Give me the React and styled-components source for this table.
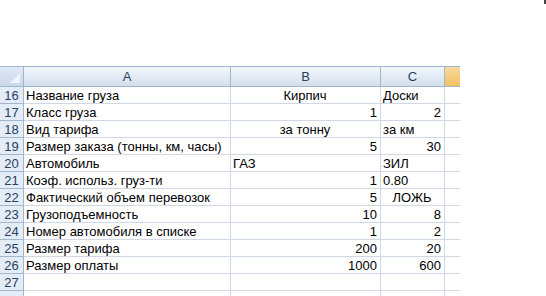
import React from 'react'
import styled, { createGlobalStyle } from 'styled-components'

const Global = createGlobalStyle`
  html, body { margin: 0; padding: 0; background: #fff; }
  body { font-family: "Liberation Sans", Arial, sans-serif; }
`

const Page = styled.div`
  position: relative;
  width: 546px;
  height: 296px;
  overflow: hidden;
  padding-top: 66px;
  box-sizing: border-box;
`

const Speck = styled.div`
  position: absolute;
  top: 0;
  right: 0;
  width: 2px;
  height: 4px;
  background: #444;
`

const Sheet = styled.div`
  display: grid;
  grid-template-columns: 24px 207px 150px 64px 15px;
  grid-template-rows: 21px;
  grid-auto-rows: 17px;
  width: 460px;
  font-size: 13px;
  color: #000;
`

const HeadCell = styled.div`
  box-sizing: border-box;
  border-top: 1px solid #9eb6ce;
  border-bottom: 1px solid #9eb6ce;
  border-right: ${p => (p.$last ? 'none' : '1px solid #9eb6ce')};
  background: ${p =>
    p.$active
      ? 'linear-gradient(#f9d99f, #f1c15f)'
      : 'linear-gradient(#f4f7fb 0%, #e2eaf5 55%, #d3ddeb 100%)'};
  color: #27415f;
  display: flex;
  align-items: center;
  justify-content: center;
  line-height: 1;
`

const Corner = styled(HeadCell)`
  position: relative;
  background: linear-gradient(#dfe8f5, #c9d8ec);
  &::after {
    content: '';
    position: absolute;
    right: 3px;
    bottom: 3px;
    border-left: 10px solid transparent;
    border-bottom: 10px solid #f1f5fb;
  }
`

const RowNum = styled.div`
  box-sizing: border-box;
  border-right: 1px solid #9eb6ce;
  border-bottom: 1px solid #9eb6ce;
  background: #e4ecf7;
  color: #27415f;
  display: flex;
  align-items: center;
  justify-content: center;
  line-height: 1;
`

const Cell = styled.div`
  box-sizing: border-box;
  border-bottom: 1px solid #d0d7e5;
  border-right: ${p => (p.$last ? 'none' : '1px solid #d0d7e5')};
  display: flex;
  align-items: center;
  justify-content: ${p =>
    p.$align === 'right' ? 'flex-end' : p.$align === 'center' ? 'center' : 'flex-start'};
  padding: 0 3px 0 2px;
  white-space: nowrap;
  line-height: 1;
`

const rows = [
  [16, 'Название груза', ['Кирпич', 'center'], ['Доски', 'left']],
  [17, 'Класс груза', ['1', 'right'], ['2', 'right']],
  [18, 'Вид тарифа', ['за тонну', 'center'], ['за км', 'left']],
  [19, 'Размер заказа (тонны, км, часы)', ['5', 'right'], ['30', 'right']],
  [20, 'Автомобиль', ['ГАЗ', 'left'], ['ЗИЛ', 'left']],
  [21, 'Коэф. использ. груз-ти', ['1', 'right'], ['0.80', 'left']],
  [22, 'Фактический объем перевозок', ['5', 'right'], ['ЛОЖЬ', 'center']],
  [23, 'Грузоподъемность', ['10', 'right'], ['8', 'right']],
  [24, 'Номер автомобиля в списке', ['1', 'right'], ['2', 'right']],
  [25, 'Размер тарифа', ['200', 'right'], ['20', 'right']],
  [26, 'Размер оплаты', ['1000', 'right'], ['600', 'right']],
  [27, '', ['', 'left'], ['', 'left']],
  ['', '', ['', 'left'], ['', 'left']],
]

export default function App() {
  return (
    <Page>
      <Global />
      <Speck />
      <Sheet>
        <Corner />
        <HeadCell>A</HeadCell>
        <HeadCell>B</HeadCell>
        <HeadCell>C</HeadCell>
        <HeadCell $active $last />
        {rows.map(([n, a, b, c], i) => (
          <React.Fragment key={i}>
            <RowNum>{n}</RowNum>
            <Cell>{a}</Cell>
            <Cell $align={b[1]}>{b[0]}</Cell>
            <Cell $align={c[1]}>{c[0]}</Cell>
            <Cell $last />
          </React.Fragment>
        ))}
      </Sheet>
    </Page>
  )
}
